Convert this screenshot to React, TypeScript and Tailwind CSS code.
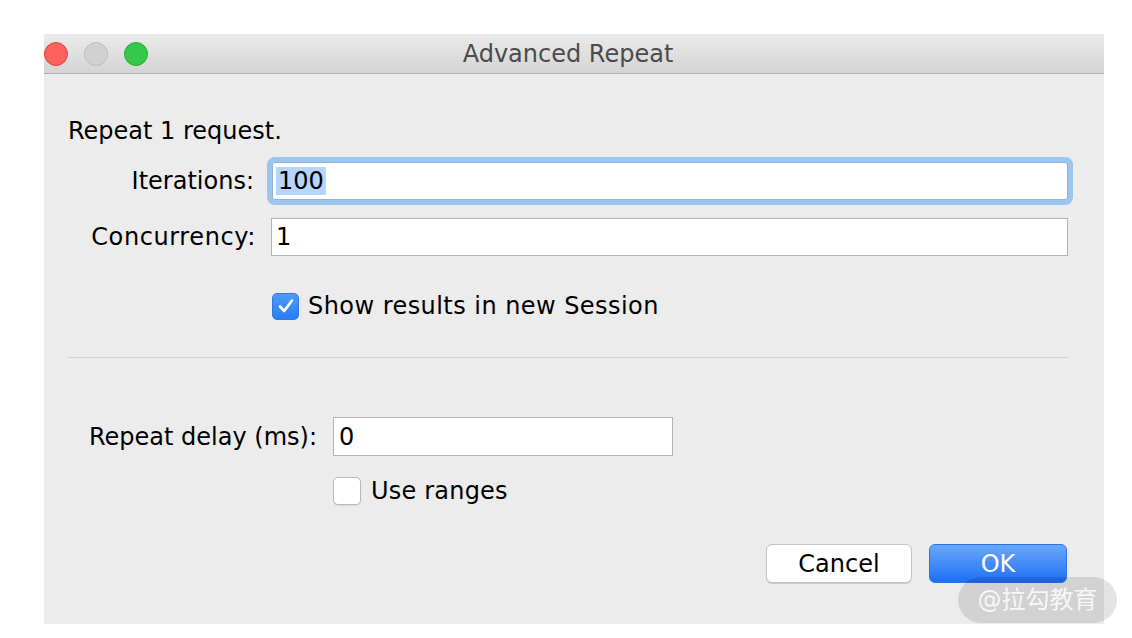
import React from "react";

const font = { fontFamily: '"DejaVu Sans", "Noto Sans CJK SC", sans-serif' };

function Light({ color, border }: { color: string; border: string }) {
  return <div className={`w-[24px] h-[24px] rounded-full border ${color} ${border}`} />;
}

function Field({ children, focused }: { children: React.ReactNode; focused?: boolean }) {
  return (
    <div
      className={
        "flex-1 h-[38px] bg-white flex items-center pl-[4px] text-[24px] text-black " +
        (focused
          ? "border border-[#8fb3dc] rounded-[3px] shadow-[0_0_0_5px_#9cc5ef]"
          : "border border-[#b4b4b4]")
      }
    >
      {children}
    </div>
  );
}

function Check({ checked }: { checked?: boolean }) {
  if (checked) {
    return (
      <div className="w-[27px] h-[27px] rounded-[5px] bg-gradient-to-b from-[#4d9af8] to-[#2a7cf4] border border-[#2d78e6] flex items-center justify-center">
        <svg width="20" height="20" viewBox="0 0 20 20">
          <path d="M4 10.5 L8.2 15 L16 4.5" fill="none" stroke="white" strokeWidth="2.6" strokeLinecap="round" strokeLinejoin="round" />
        </svg>
      </div>
    );
  }
  return <div className="w-[28px] h-[28px] rounded-[5px] bg-white border border-[#b9b9b9] shadow-[0_1px_1px_rgba(0,0,0,0.08)]" />;
}

export default function App() {
  return (
    <div className="relative w-[1132px] h-[638px] bg-white pt-[34px] pl-[44px]" style={font}>
      <div className="w-[1060px] h-[590px] bg-[#ececec] flex flex-col">
        {/* title bar */}
        <div className="h-[40px] grid grid-cols-[1fr_auto_1fr] items-center bg-gradient-to-b from-[#ebebeb] to-[#d4d4d4] border-b border-[#b1b1b1]">
          <div className="flex items-center gap-[16px] pt-[1px]">
            <Light color="bg-[#fc615d]" border="border-[#e0443e]" />
            <Light color="bg-[#d1d1d1]" border="border-[#bdbdbd]" />
            <Light color="bg-[#35c84a]" border="border-[#26ab39]" />
          </div>
          <div className="text-[24px] text-[#4b4b4b] mr-[12px] leading-none">Advanced Repeat</div>
          <div />
        </div>

        {/* body */}
        <div className="flex flex-col pl-[24px] pr-[36px]">
          <div className="mt-[43px] h-[28px] leading-[28px] text-[24px] text-black">Repeat 1 request.</div>

          <div className="mt-[17px] flex items-center">
            <div className="w-[186px] text-right text-[24px] text-black">Iterations:</div>
            <div className="ml-[18px] flex-1 flex">
              <Field focused>
                <span className="bg-[#b4d5fe] leading-[28px] px-[2px] -ml-[1px]">100</span>
              </Field>
            </div>
          </div>

          <div className="mt-[18px] flex items-center">
            <div className="w-[188px] text-right text-[24px] text-black tracking-[0.6px]">Concurrency:</div>
            <div className="ml-[15px] flex-1 flex">
              <Field>
                <span>1</span>
              </Field>
            </div>
          </div>

          <div className="mt-[36px] h-[28px] flex items-center ml-[204px] gap-[9px]">
            <Check checked />
            <span className="text-[24px] text-black tracking-[0.45px]">Show results in new Session</span>
          </div>

          <div className="mt-[37px] h-px bg-[#d2d2d2]" />

          <div className="mt-[59px] flex items-center">
            <div className="w-[249px] text-right text-[24px] text-black">Repeat delay (ms):</div>
            <div className="ml-[16px] w-[340px] h-[39px] bg-white border border-[#b4b4b4] flex items-center pl-[5px] text-[24px] text-black">
              0
            </div>
          </div>

          <div className="mt-[21px] h-[28px] flex items-center ml-[265px] gap-[10px]">
            <Check />
            <span className="text-[24px] text-black tracking-[0.2px]">Use ranges</span>
          </div>

          <div className="mt-[39px] flex justify-end gap-[17px] pr-[1px]">
            <button className="w-[146px] h-[39px] rounded-[6px] bg-white border border-[#c4c4c4] shadow-[0_1px_1px_rgba(0,0,0,0.15)] text-[24px] text-black">
              Cancel
            </button>
            <button className="w-[138px] h-[39px] rounded-[6px] bg-gradient-to-b from-[#69a7fa] to-[#1a6ff6] border border-[#2b74e8] text-[24px] text-white">
              OK
            </button>
          </div>
        </div>
      </div>

      {/* watermark */}
      <div className="absolute left-[958px] top-[577px] w-[159px] h-[46px] rounded-full bg-[rgba(0,0,0,0.11)] flex items-center justify-center text-[24px] text-[rgba(255,255,255,0.85)]">
        @拉勾教育
      </div>
    </div>
  );
}
